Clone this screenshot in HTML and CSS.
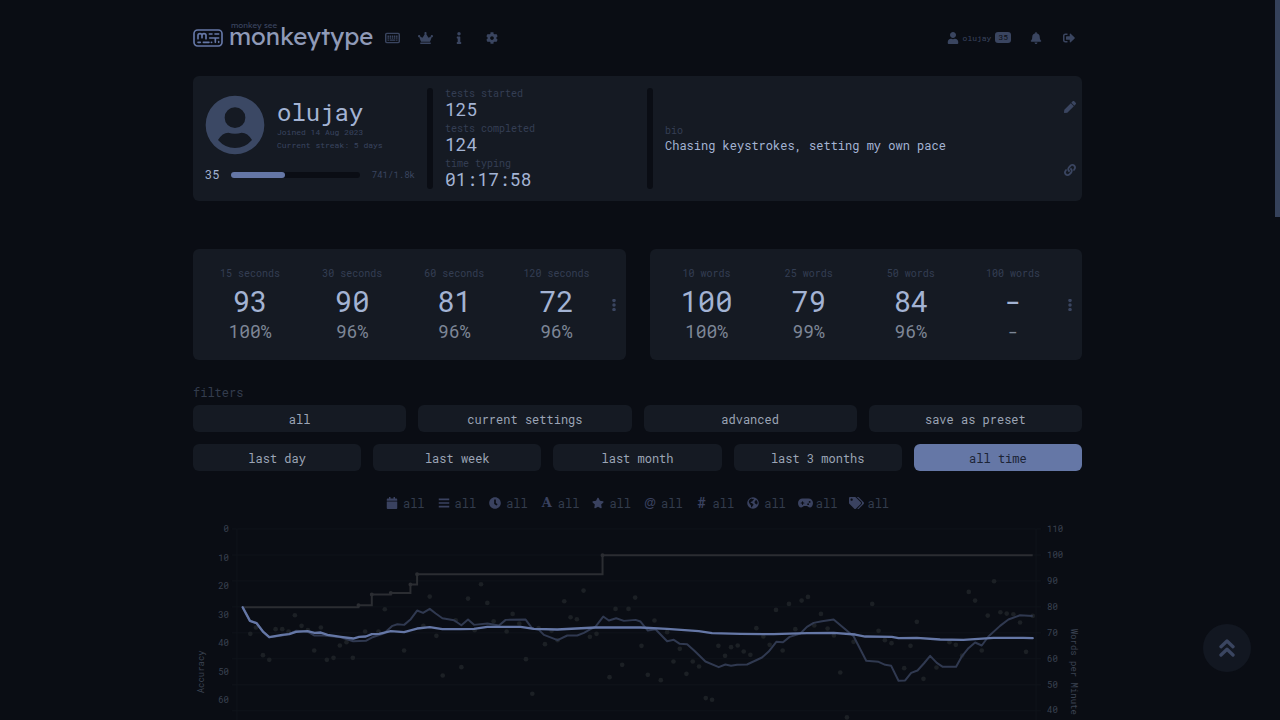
FILE: index.html
```html
<!DOCTYPE html>
<html lang="en">
<head>
<meta charset="utf-8">
<title>monkeytype</title>
<link rel="stylesheet" href="styles.css">
</head>
<body>
<div class="page">
  <header class="top">
    <a class="logo" href="#">
      <svg class="logo-mark" viewBox="0 0 90 54" fill="none" stroke="currentColor" stroke-width="5" stroke-linecap="round" stroke-linejoin="round"><rect x="3" y="3" width="84" height="48" rx="11"/><path d="M15 29V19q0-5 6-5t6 5v7m0-7q0-5 6-5t6 5v10M49 15h8M66 15h11M50 27h8M57 27h20M67 28v12M15 40h7M31 40h17M55 40h1M77 38v2"/></svg>
      <span class="logo-text"><span class="logo-top">monkey see</span>monkeytype</span>
    </a>
    <nav class="menu">
      <a href="#" aria-label="Test"><svg class="icon wide" viewBox="0 0 42 32" fill="none" stroke="currentColor"><rect x="2" y="3" width="38" height="26" rx="3" stroke-width="4"/><path d="M7 11h28M7 16h28" stroke-width="4" stroke-dasharray="4 2"/><path d="M7 22h4M13 22h16M31 22h4" stroke-width="4"/></svg></a>
      <a href="#" aria-label="Leaderboards"><svg class="icon wide" viewBox="0 0 640 512"><path d="M528 448H112c-8.800 0-16 7.200-16 16v32c0 8.800 7.200 16 16 16h416c8.800 0 16-7.200 16-16v-32c0-8.800-7.200-16-16-16zm64-320c-26.500 0-48 21.500-48 48 0 7.100 1.600 13.700 4.400 19.800L476 239.200c-15.400 9.200-35.300 4-44.200-11.600L350.300 85C361 76.200 368 63 368 48c0-26.500-21.500-48-48-48s-48 21.500-48 48c0 15 7 28.200 17.700 37l-81.500 142.600c-8.900 15.600-28.900 20.800-44.200 11.600l-72.300-43.400c2.700-6 4.400-12.700 4.400-19.800 0-26.500-21.500-48-48-48S0 149.500 0 176s21.500 48 48 48c2.600 0 5.200-.4 7.700-.8L128 416h384l72.300-192.800c2.500.4 5.100.8 7.700.8 26.500 0 48-21.500 48-48s-21.500-48-48-48z"/></svg></a>
      <a href="#" aria-label="About"><svg class="icon" viewBox="0 0 192 512"><path d="M20 424h20V280H20c-11 0-20-9-20-20v-48c0-11 9-20 20-20h112c11 0 20 9 20 20v212h20c11 0 20 9 20 20v48c0 11-9 20-20 20H20c-11 0-20-9-20-20v-48c0-11 9-20 20-20zM96 0C56 0 24 32 24 72s32 72 72 72 72-32 72-72S136 0 96 0z"/></svg></a>
      <a href="#" aria-label="Settings"><svg class="icon" viewBox="0 0 512 512"><path d="M487.400 315.700l-42.600-24.600c4.300-23.200 4.300-47 0-70.200l42.600-24.600c4.900-2.800 7.100-8.600 5.500-14-11.100-35.600-30-67.800-54.700-94.600-3.800-4.100-10-5.100-14.800-2.300L380.800 110c-17.900-15.400-38.500-27.300-60.800-35.100V25.800c0-5.600-3.900-10.500-9.400-11.700-36.700-8.200-74.300-7.800-109.200 0-5.500 1.200-9.400 6.100-9.400 11.700V75c-22.200 7.900-42.800 19.800-60.800 35.100L88.700 85.500c-4.900-2.800-11-1.900-14.800 2.300-24.700 26.700-43.600 58.900-54.700 94.600-1.700 5.400.6 11.200 5.500 14L67.300 221c-4.300 23.200-4.300 47 0 70.200l-42.600 24.600c-4.900 2.800-7.100 8.600-5.500 14 11.100 35.600 30 67.800 54.700 94.600 3.800 4.100 10 5.100 14.800 2.300l42.600-24.600c17.900 15.400 38.500 27.300 60.800 35.100v49.200c0 5.600 3.900 10.500 9.400 11.700 36.700 8.200 74.300 7.800 109.200 0 5.500-1.200 9.400-6.100 9.400-11.700v-49.200c22.200-7.900 42.800-19.800 60.800-35.100l42.600 24.600c4.900 2.800 11 1.900 14.800-2.300 24.700-26.700 43.600-58.900 54.700-94.600 1.500-5.500-.7-11.300-5.600-14.100zM256 336c-44.100 0-80-35.900-80-80s35.900-80 80-80 80 35.900 80 80-35.900 80-80 80z"/></svg></a>
    </nav>
    <nav class="account">
      <a class="user" href="#"><svg class="icon" viewBox="0 0 448 512"><path d="M224 256c71 0 128-57 128-128S295 0 224 0 96 57 96 128s57 128 128 128zm90 32h-17c-22 10-47 16-73 16s-51-6-73-16h-17C60 288 0 348 0 422v42c0 26 22 48 48 48h352c26 0 48-22 48-48v-42c0-74-60-134-134-134z"/></svg><span>olujay</span><span class="level">35</span></a>
      <a href="#" aria-label="Alerts"><svg class="icon" viewBox="0 0 448 512"><path d="M224 512c35 0 64-29 64-64H160c0 35 29 64 64 64zm215-150c-19-21-55-52-55-154 0-78-54-140-128-155V32c0-18-14-32-32-32s-32 14-32 32v21C119 68 64 130 64 208c0 102-36 133-55 154-6 7-9 14-9 22 0 16 13 32 32 32h384c19 0 32-16 32-32 0-8-3-15-9-22z"/></svg></a>
      <a href="#" aria-label="Sign out"><svg class="icon" viewBox="0 0 512 512"><path d="M497 273L329 441c-15 15-41 4-41-17v-96H152c-13 0-24-11-24-24v-96c0-13 11-24 24-24h136V88c0-21 26-32 41-17l168 168c9 9 9 25 0 34zM192 436v-40c0-7-5-12-12-12H96c-18 0-32-14-32-32V160c0-18 14-32 32-32h84c7 0 12-5 12-12V76c0-7-5-12-12-12H96c-53 0-96 43-96 96v192c0 53 43 96 96 96h84c7 0 12-5 12-12z"/></svg></a>
    </nav>
  </header>

  <main>
    <section class="card profile">
      <div class="profile-grid">
        <div class="identity">
          <div class="who">
            <svg class="avatar" viewBox="0 0 180 180"><path transform="translate(2 2)" fill-rule="evenodd" d="M88 0a88 88 0 1 0 0 176a88 88 0 1 0 0-176zM88 35a31 31 0 1 1 0 62a31 31 0 1 1 0-62zM37 133Q50 111 68 111Q88 117 108 111Q126 111 139 133Q118 157 88 157Q58 157 37 133z"/></svg>
            <div>
              <h1 class="name">olujay</h1>
              <p class="tiny">Joined 14 Aug 2023</p>
              <p class="tiny">Current streak: 5 days</p>
            </div>
          </div>
          <div class="xp">
            <span class="xp-level">35</span>
            <div class="bar"><div class="bar-fill" style="width:42%"></div></div>
            <span class="xp-count">741/1.8k</span>
          </div>
        </div>
        <div class="divider"></div>
        <dl class="tests">
          <div><dt>tests started</dt><dd>125</dd></div>
          <div><dt>tests completed</dt><dd>124</dd></div>
          <div><dt>time typing</dt><dd>01:17:58</dd></div>
        </dl>
        <div class="divider"></div>
        <dl class="bio"><dt>bio</dt><dd>Chasing keystrokes, setting my own pace</dd></dl>
      </div>
      <div class="actions">
        <button aria-label="Edit profile"><svg class="icon" viewBox="0 0 512 512"><path d="M291 93l128 128-278 278-114 13C11 514-2 501 0 485l13-114L291 93zm207-19l-60-60c-19-19-49-19-68 0l-57 57 128 128 57-57c19-19 19-49 0-68z"/></svg></button>
        <button aria-label="Copy link"><svg class="icon" viewBox="0 0 512 512"><path d="M326.600 185.400c59.700 59.800 58.900 155.700.4 214.600l-67.600 67.600c-59.300 59.300-155.700 59.300-215 0-59.300-59.300-59.300-155.700 0-215l37.200-37.100c9.800-9.800 26.800-3.300 27.300 10.600.6 17.700 3.800 35.500 9.700 52.700 2 5.800.5 12.300-3.800 16.600l-13.100 13.100c-28 28-28.900 73.700-1.200 102 28.100 28.600 74.100 28.700 102.400.5l67.200-67.200c28.200-28.200 28-73.800 0-101.800-3.700-3.700-7.500-6.600-10.400-8.600a16 16 0 0 1-6.900-12.600c-.4-10.600 3.300-21.500 11.700-29.800l21-21.100c5.600-5.500 14.200-6.200 20.600-1.700a152 152 0 0 1 20.500 17.200zM467.500 44.400c-59.200-59.200-155.600-59.200-214.900 0l-67.600 67.600c-58.600 58.900-59.400 154.800.4 214.600a152 152 0 0 0 20.500 17.200c6.400 4.500 15.100 3.800 20.600-1.700l21-21.100c8.400-8.300 12.100-19.200 11.700-29.800a16 16 0 0 0-6.900-12.600c-2.900-2-6.700-4.900-10.400-8.600-28-28-28.200-73.600 0-101.800l67.200-67.200c28.300-28.200 74.300-28 102.400.5 27.700 28.300 26.800 74-1.200 102l-13.100 13.100c-4.300 4.300-5.800 10.800-3.800 16.600 5.900 17.200 9.100 35 9.700 52.700.5 13.900 17.500 20.400 27.300 10.600l37.100-37.100c59.300-59.300 59.300-155.700 0-215z"/></svg></button>
      </div>
    </section>

    <div class="bests">
      <section class="card best">
        <dl><dt>15 seconds</dt><dd class="wpm">93</dd><dd class="acc">100%</dd></dl>
        <dl><dt>30 seconds</dt><dd class="wpm">90</dd><dd class="acc">96%</dd></dl>
        <dl><dt>60 seconds</dt><dd class="wpm">81</dd><dd class="acc">96%</dd></dl>
        <dl><dt>120 seconds</dt><dd class="wpm">72</dd><dd class="acc">96%</dd></dl>
        <button aria-label="Show all"><svg class="icon" viewBox="0 0 48 48"><circle cx="24" cy="6" r="7"/><circle cx="24" cy="24" r="7"/><circle cx="24" cy="42" r="7"/></svg></button>
      </section>
      <section class="card best">
        <dl><dt>10 words</dt><dd class="wpm">100</dd><dd class="acc">100%</dd></dl>
        <dl><dt>25 words</dt><dd class="wpm">79</dd><dd class="acc">99%</dd></dl>
        <dl><dt>50 words</dt><dd class="wpm">84</dd><dd class="acc">96%</dd></dl>
        <dl><dt>100 words</dt><dd class="wpm">-</dd><dd class="acc">-</dd></dl>
        <button aria-label="Show all"><svg class="icon" viewBox="0 0 48 48"><circle cx="24" cy="6" r="7"/><circle cx="24" cy="24" r="7"/><circle cx="24" cy="42" r="7"/></svg></button>
      </section>
    </div>

    <section class="filters">
      <h2>filters</h2>
      <div class="row"><button>all</button><button>current settings</button><button>advanced</button><button>save as preset</button></div>
      <div class="row"><button>last day</button><button>last week</button><button>last month</button><button>last 3 months</button><button class="active">all time</button></div>
      <ul class="summary">
        <li><svg class="icon" viewBox="0 0 448 512"><path d="M12 192h424c7 0 12 5 12 12v260c0 26-22 48-48 48H48c-26 0-48-22-48-48V204c0-7 5-12 12-12zm436-44v-36c0-26-22-48-48-48h-48V12c0-7-5-12-12-12h-40c-7 0-12 5-12 12v52H160V12c0-7-5-12-12-12h-40c-7 0-12 5-12 12v52H48C22 64 0 86 0 112v36c0 7 5 12 12 12h424c7 0 12-5 12-12z"/></svg>all</li>
        <li><svg class="icon" viewBox="0 0 448 512"><path d="M0 68h448v66H0zM0 223h448v66H0zM0 378h448v66H0z"/></svg>all</li>
        <li><svg class="icon" viewBox="0 0 512 512"><path d="M256 8C119 8 8 119 8 256s111 248 248 248 248-111 248-248S393 8 256 8zm57 350l-88-64c-3-2-5-6-5-10V116c0-7 5-12 12-12h48c7 0 12 5 12 12v138l64 46c5 4 6 11 2 17l-28 38c-4 6-11 7-17 3z"/></svg>all</li>
        <li><span class="glyph slab">A</span>all</li>
        <li><svg class="icon" viewBox="0 0 576 512"><path d="M259 18l-65 132-146 22c-26 3-37 36-18 54l106 103-25 146c-5 26 23 46 46 33l131-68 131 68c23 13 51-7 46-33l-25-146 106-103c19-18 8-51-18-54l-146-22L317 18c-12-24-46-24-58 0z"/></svg>all</li>
        <li><span class="glyph at">@</span>all</li>
        <li><span class="glyph hash">#</span>all</li>
        <li><svg class="icon" viewBox="0 0 512 512"><path fill-rule="evenodd" d="M256 8a248 248 0 1 0 0 496a248 248 0 1 0 0-496zM75 170Q110 95 180 68L235 90L280 78L290 115L245 150L225 190L170 205L150 245L205 260L275 305L265 350L230 390L205 445L175 430L165 350L125 305L85 235zM340 175L385 130L430 165L455 240L430 315L385 310L335 265L320 215z"/></svg>all</li>
        <li><svg class="icon wide" viewBox="0 0 640 512"><path fill-rule="evenodd" d="M192 64C86 64 0 150 0 256s60 192 130 192c60 0 100-64 130-64h120c30 0 70 64 130 64 70 0 130-86 130-192S554 64 448 64H192zM496 168a40 40 0 1 1 0 80 40 40 0 1 1 0-80zM392 304a40 40 0 1 1 80 0 40 40 0 1 1-80 0zM168 200c0-13 11-24 24-24s24 11 24 24v32h32c13 0 24 11 24 24s-11 24-24 24h-32v32c0 13-11 24-24 24s-24-11-24-24v-32h-32c-13 0-24-11-24-24s11-24 24-24h32v-32z"/></svg>all</li>
        <li><svg class="icon wide" viewBox="0 0 640 512"><path d="M498 226L286 14A48 48 0 0 0 252 0H48C22 0 0 22 0 48v204a48 48 0 0 0 14 34l212 212c19 19 49 19 68 0l204-204c19-19 19-49 0-68zM112 160c-26 0-48-22-48-48s22-48 48-48 48 22 48 48-22 48-48 48zm514 134L422 498c-19 19-49 19-68 0l174-174c17-17 26-40 26-64s-9-47-26-64L331 0h49a48 48 0 0 1 34 14l212 212c19 19 19 49 0 68z"/></svg>all</li>
      </ul>
    </section>

    <svg class="chart" viewBox="0 0 890 240" role="img" aria-label="Typing speed and accuracy over time">
      <path class="gridline" d="M39 14h810M39 40h810M39 66h810M39 92h810M39 118h810M39 144h810M39 170h810M39 196h810M39 222h810M44 14v226M844 14v226"/>
      <g transform="scale(.33333) translate(-6 0)">
        <g id="points-early" class="points"></g>
        <g id="points-late" class="points" transform="translate(1350 0)"></g>
        <path class="record" d="M155 277H503V271H543V239H600V234H659V209H679V178H1236V121H2528"/>
        <path class="record-dots" d="M503 271h0M543 239h0M600 234h0M659 209h0M679 178h0M1236 121h0"/>
        <path class="recent" d="M155 277L177 318L197 325L216 350L235 367L274 362L295 357L315 348L350 350L371 362L400 362L450 367L487 379L525 378L543 368L580 355L605 333L620 328L640 330L660 313L679 287L697 294L717 282L735 296L755 310L790 316L812 331L832 314L850 330L890 326L925 332L945 315L1005 314L1025 341L1045 345L1060 360L1101 376L1130 362L1160 362L1180 354L1200 343L1215 335L1238 305L1255 317L1277 310L1300 318L1335 315L1350 320L1372 347L1395 343L1430 379L1450 375L1468 387L1490 388L1512 408L1545 440L1585 457L1605 449L1622 453L1640 450L1670 449L1715 428L1735 410L1758 381L1778 382L1798 366L1830 356L1850 336L1870 324L1895 319L1930 314L1990 364L2028 438L2065 441L2085 450L2103 453L2125 498L2145 497L2163 474L2182 467L2201 446L2220 423L2240 444L2258 456L2298 456L2315 425L2335 400L2355 383L2375 392L2395 365L2430 333L2455 314L2490 301L2528 303"/>
        <path class="overall" d="M155 277L177 318L197 325L216 350L235 367L274 360L295 358L315 351L350 349L371 354L390 353L410 360L450 366L487 371L505 366L525 365L543 358L565 357L600 349L640 352L679 341L717 337L755 343L810 343L850 342L890 336L990 336L1030 342L1100 344L1215 338L1350 338L1430 342L1525 349L1565 355L1650 357L1750 358L1850 355L1930 354L1995 359L2025 365L2105 366L2125 370L2180 369L2250 374L2320 375L2410 369L2500 369L2528 370"/>
      </g>
      <g class="ticks" text-anchor="end"><text x="36" y="17">0</text><text x="36" y="46">10</text><text x="36" y="74">20</text><text x="36" y="103">30</text><text x="36" y="131">40</text><text x="36" y="160">50</text><text x="36" y="188">60</text></g>
      <g class="ticks"><text x="855" y="17">110</text><text x="855" y="43">100</text><text x="855" y="69">90</text><text x="855" y="95">80</text><text x="855" y="121">70</text><text x="855" y="147">60</text><text x="855" y="173">50</text><text x="855" y="198">40</text></g>
      <g class="ticks" text-anchor="middle"><text transform="translate(11 157) rotate(-90)">Accuracy</text><text transform="translate(879 157) rotate(90)">Words per Minute</text></g>
    </svg>
  </main>
</div>
<button class="to-top" aria-label="Back to top"><svg viewBox="0 0 48 60" fill="none" stroke="currentColor" stroke-width="10" stroke-linecap="round" stroke-linejoin="round"><path d="M6 26L24 9L42 26M6 51L24 34L42 51"/></svg></button>
<div class="scroll-thumb"></div>
<script src="chart.js"></script>
</body>
</html>
```

FILE: styles.css
```css
:root {
  --bg: #0a0d14;
  --card: #151a23;
  --main: #6577a6;
  --sub: #3a4560;
  --dim: #333c4d;
  --text: #a3b3d3;
}
* { box-sizing: border-box; }
html, body { height: 100%; }
body {
  margin: 0;
  padding: 0 18px 0 13px;
  overflow: hidden;
  background: var(--bg);
  color: var(--text);
  font: 12px/16px "Roboto Mono", "DejaVu Sans Mono", monospace;
}
h1, h2, p, dl, dd, ul { margin: 0; padding: 0; font-weight: 400; }
a { color: inherit; text-decoration: none; }
button { font: inherit; color: inherit; border: 0; padding: 0; background: none; cursor: pointer; }
.page { max-width: 889px; margin: 0 auto; }
.icon { display: block; width: 12px; height: 12px; fill: currentColor; flex: none; }
.icon.wide { width: 15px; }
.icon[fill="none"] { fill: none; }

.top { display: flex; align-items: center; height: 76px; padding-bottom: 1px; color: var(--sub); }
.logo { display: flex; align-items: center; gap: 6px; color: var(--main); }
.logo-mark { width: 30px; height: 18px; }
.logo-text { position: relative; padding-bottom: 4px; font: 24px/30px "Lexend Deca", Lato, sans-serif; color: #8f9ab8; }
.logo-top { position: absolute; left: 2px; top: 0; font-size: 8px; line-height: 8px; color: var(--sub); }
.menu { display: flex; gap: 18px; margin-left: 12px; }
.menu a { display: flex; justify-content: center; width: 15px; }
.account { display: flex; align-items: center; gap: 21px; margin-left: auto; padding-right: 7px; }
.user { display: flex; align-items: center; gap: 4px; margin-right: -2px; font-size: 8px; }
.level { padding: 0 3px; line-height: 11px; border-radius: 3px; background: var(--sub); color: var(--bg); }

.card { background: var(--card); border-radius: 6px; }
.profile { display: flex; }
.profile-grid {
  flex: 1;
  display: grid;
  grid-template-columns: 210px 6px 190px 6px 1fr;
  gap: 12px;
  padding: 12px 0 12px 12px;
}
.identity { display: flex; flex-direction: column; justify-content: center; gap: 12px; }
.who { display: flex; align-items: center; gap: 12px; }
.avatar { width: 60px; height: 60px; fill: #3b4864; }
.name { font-size: 24px; line-height: 28px; }
.tiny { font-size: 8px; line-height: 13px; color: var(--sub); }
.xp { display: flex; align-items: center; gap: 12px; }
.xp-level { line-height: 15px; }
.bar { flex: 1; height: 6px; border-radius: 3px; background: var(--bg); }
.bar-fill { height: 100%; border-radius: 3px; background: var(--main); }
.xp-count { font-size: 9px; line-height: 12px; color: var(--sub); }
.divider { border-radius: 3px; background: var(--bg); }
.tests { display: flex; flex-direction: column; gap: 4px; }
dt { font-size: 10px; line-height: 12px; color: #343e53; }
.tests dt { line-height: 11px; }
.tests dd { font-size: 18px; line-height: 20px; }
.bio { align-self: center; }
.actions { display: grid; grid-template-rows: 1fr 1fr; width: 24px; color: var(--sub); }
.actions button, .best button { display: flex; align-items: center; justify-content: center; }

.bests { display: grid; grid-template-columns: 1fr 1fr; gap: 24px; margin-top: 48px; }
.best { display: grid; grid-template-columns: repeat(4, 1fr) 18px; padding-left: 6px; text-align: center; color: var(--sub); }
.best button { justify-content: flex-start; }
.best dl { padding: 19px 0 20px; }
.wpm { font-size: 29px; line-height: 42px; color: var(--text); }
.acc { font-size: 18px; line-height: 18px; color: #7d8696; }

.filters { margin-top: 24px; }
.filters h2 { font-size: 12px; line-height: 16px; margin-bottom: 5px; color: var(--dim); }
.row { display: grid; grid-auto-flow: column; grid-auto-columns: 1fr; gap: 12px; margin-bottom: 12px; }
.row button { height: 27px; border-radius: 6px; background: var(--card); color: #9ba4b5; }
.row .active { background: var(--main); color: #1c2436; }
.summary { display: flex; justify-content: center; gap: 13px; margin: 24px 0 0; list-style: none; color: var(--dim); }
.summary li { display: flex; align-items: center; gap: 5px; }
.summary .icon, .glyph { width: 12px; color: #3a4260; }
.summary .wide { width: 15px; margin: 0 -2px 0 -1px; }
.glyph { font: bold 14px/16px "Roboto Mono", monospace; text-align: center; }
.slab { font: bold 13px/16px "DejaVu Serif", serif; }
.at { font: bold 12px/14px "Liberation Sans", sans-serif; }

.chart { display: block; width: 100%; height: auto; margin-top: 4px; fill: none; }
.gridline { stroke: #10141b; }
.record { stroke: #2b2d32; stroke-width: 6; }
.record-dots { stroke: #2b2d32; stroke-width: 12; stroke-linecap: round; }
.recent { stroke: #303950; stroke-width: 6; stroke-linejoin: round; }
.overall { stroke: var(--main); stroke-width: 7; stroke-linejoin: round; stroke-linecap: round; }
.points { fill: #1c2025; }
.ticks { fill: #3a4251; font-size: 9px; }

.to-top {
  position: fixed;
  right: 29px;
  bottom: 48px;
  display: grid;
  place-items: center;
  width: 48px;
  height: 48px;
  border-radius: 50%;
  background: #121721;
  color: var(--sub);
}
.to-top svg { width: 16px; height: 20px; }
.scroll-thumb { position: fixed; top: 0; right: 0; width: 5px; height: 217px; background: #35415a; }
```

FILE: chart.js
```js
const early = [
  [178,357],[195,338],[216,421],[235,435],[254,343],[274,343],[293,350],[312,301],[332,333],[351,346],
  [370,407],[390,338],[408,435],[428,429],[447,392],[467,382],[486,429],[523,350],[563,350],[582,283],
  [640,407],[698,333],[717,245],[737,363],[756,482],[795,316],[812,457],[832,251],[852,346],[871,208],
  [890,264],[909,319],[948,350],[966,297],[986,326],[1006,433],[1025,537],[1044,340],[1063,388],[1083,348],
  [1101,376],[1121,259],[1140,307],[1159,313],[1179,227],[1198,366],[1218,357],[1257,487],[1275,282],
  [1295,450],[1314,282],[1334,248]
];
const late = [
  [3,393],[22,480],[42,317],[61,496],[80,352],[99,440],[118,402],[138,477],[157,440],[176,455],[196,550],
  [215,555],[234,393],[254,423],[272,397],[292,392],[310,410],[330,420],[348,340],[369,365],[388,390],
  [407,285],[427,407],[446,267],[465,343],[484,257],[503,246],[522,332],[542,297],[562,341],[581,362],
  [600,473],[620,608],[640,381],[696,267],[715,348],[734,376],[754,385],[792,460],[811,393],[830,321],
  [850,492],[889,458],[928,382],[947,390],[966,422],[986,231],[1005,257],[1025,407],[1043,302],[1062,199],
  [1081,292],[1100,296],[1120,298],[1140,323],[1158,411],[1178,303]
];
function plot(id, points) {
  const group = document.getElementById(id);
  for (const [x, y] of points) {
    const dot = document.createElementNS("http://www.w3.org/2000/svg", "circle");
    dot.setAttribute("cx", x);
    dot.setAttribute("cy", y);
    dot.setAttribute("r", 7);
    group.append(dot);
  }
}
plot("points-early", early);
plot("points-late", late);
```
